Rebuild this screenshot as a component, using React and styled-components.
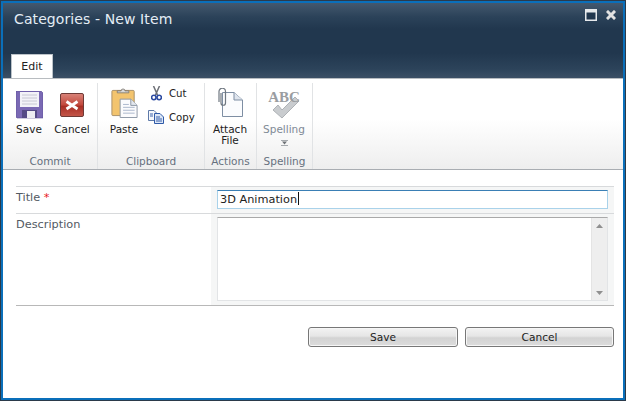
import React from "react";
import styled, { createGlobalStyle } from "styled-components";

const GlobalStyle = createGlobalStyle`
  html, body { margin: 0; padding: 0; background: #fff; overflow: hidden; }
  body { font-family: "DejaVu Sans", Verdana, sans-serif; }
`;

const Frame = styled.div`
  box-sizing: border-box;
  width: 626px;
  height: 401px;
  border: 1px solid #2b3a4a;
  display: flex;
`;

const Dialog = styled.div`
  flex: 1;
  display: flex;
  flex-direction: column;
  border: 2px solid #0a6fba;
  background: #fff;
  min-width: 0;
`;

const Header = styled.header`
  height: 75px;
  flex: none;
  display: flex;
  flex-direction: column;
  justify-content: space-between;
  background: linear-gradient(#44586e 0, #2b4259 14px, #21374e 26px, #21374e 50px, #2c435a 66px, #3b4f65 75px);
`;

const TitleRow = styled.div`
  display: flex;
  align-items: flex-start;
  justify-content: space-between;
  padding: 7px 7px 0 11px;
`;

const DialogTitle = styled.h1`
  margin: 0;
  font-size: 14px;
  line-height: 18px;
  font-weight: 400;
  color: #e4edf5;
  letter-spacing: 0.1px;
`;

const WindowControls = styled.div`
  display: flex;
  gap: 9px;
  align-items: center;
  margin-top: -1px;
`;

const Tab = styled.div`
  box-sizing: border-box;
  width: 42px;
  height: 24px;
  margin-left: 8px;
  border: 1px solid #bcc3c9;
  border-bottom: 0;
  background: #fff;
  color: #222;
  font-size: 11px;
  line-height: 24px;
  text-align: center;
`;

const Ribbon = styled.div`
  box-sizing: border-box;
  height: 92px;
  flex: none;
  display: flex;
  padding-top: 4px;
  border-top: 1px solid #b8bcc0;
  border-bottom: 1px solid #a9adb2;
  background: linear-gradient(#fff 0, #fff 40px, #eeeeee 90px);
`;

const Group = styled.section`
  box-sizing: border-box;
  width: ${(p) => p.$width}px;
  display: flex;
  flex-direction: column;
  border-right: 1px solid #e1e3e5;
`;

const GroupBody = styled.div`
  flex: 1;
  display: flex;
  padding: 5px 0 0 ${(p) => p.$inset || 0}px;
`;

const GroupLabel = styled.div`
  height: 16px;
  font-size: 10.5px;
  line-height: 16px;
  text-align: center;
  color: #66707e;
`;

const LargeButton = styled.div`
  width: ${(p) => p.$width}px;
  display: flex;
  flex-direction: column;
  align-items: center;
  color: ${(p) => (p.$muted ? "#7f8a96" : "#222")};
  font-size: 10.5px;
  line-height: 11px;
  text-align: center;
`;

const IconSlot = styled.div`
  height: 33px;
  margin-bottom: 3px;
  display: flex;
  align-items: ${(p) => p.$align || "center"};
  justify-content: center;
`;

const SplitMark = styled.span`
  display: flex;
  margin-top: 5px;
`;

const SmallStack = styled.div`
  display: flex;
  flex-direction: column;
  gap: 8px;
  margin: -3px 0 0 3px;
`;

const SmallButton = styled.div`
  display: flex;
  align-items: center;
  gap: 5px;
  height: 16px;
  font-size: 10.2px;
  color: #222;
`;

const SmallIcon = styled.span`
  width: 16px;
  display: flex;
  justify-content: center;
`;

const Form = styled.div`
  margin: 16px 9px 0 13px;
  border-top: 1px solid #d8dadc;
`;

const Row = styled.div`
  display: grid;
  grid-template-columns: 195px 1fr;
  height: ${(p) => p.$height}px;
  border-bottom: 1px solid ${(p) => p.$line};
`;

const Label = styled.div`
  padding-top: 4px;
  font-size: 11.3px;
  line-height: 14px;
  color: #525a63;
`;

const Required = styled.span`
  color: #e8141c;
`;

const Field = styled.div`
  background: #f5f6f6;
  padding: 3px 6px;
`;

const TextInput = styled.div`
  box-sizing: border-box;
  height: 19px;
  padding-left: 2px;
  border: 1px solid #a9d2ea;
  border-top-color: #3a7fb5;
  background: #fff;
  color: #222;
  font-size: 11.3px;
  line-height: 18px;
`;

const Caret = styled.span`
  display: inline-block;
  width: 1px;
  height: 13px;
  margin-left: 1px;
  background: #111;
  vertical-align: -2px;
`;

const TextArea = styled.div`
  box-sizing: border-box;
  height: 84px;
  display: flex;
  justify-content: flex-end;
  border: 1px solid #e2e4e6;
  border-top-color: #a9a9a9;
  background: #fff;
`;

const Scrollbar = styled.div`
  width: 16px;
  display: flex;
  flex-direction: column;
  justify-content: space-between;
  align-items: center;
  padding: 6px 0 5px;
  box-sizing: border-box;
  background: #eeeeee;
  border-left: 1px solid #e4e4e4;
`;

const Actions = styled.div`
  display: flex;
  justify-content: flex-end;
  gap: 7px;
  margin: 21px 9px 0 0;
`;

const PushButton = styled.div`
  box-sizing: border-box;
  width: ${(p) => p.$width}px;
  height: 20px;
  border: 1px solid #777;
  border-radius: 3px;
  background: linear-gradient(#f3f3f3 0, #e6e6e6 45%, #d3d3d3 55%, #dcdcdc 100%);
  box-shadow: inset 0 0 0 1px #f6f6f6;
  color: #222;
  font-size: 10.6px;
  line-height: 19px;
  text-align: center;
`;

const Maximize = () => (
  <svg width="12" height="12" viewBox="0 0 12 12">
    <rect x="0.75" y="0.75" width="10.5" height="10.5" fill="#21374e" stroke="#e6e9ec" strokeWidth="1.5" />
    <rect x="1" y="1" width="10" height="2.5" fill="#e6e9ec" />
  </svg>
);

const Close = () => (
  <svg width="10" height="10" viewBox="0 0 10 10">
    <path d="M2 2 L8 8 M8 2 L2 8" stroke="#e2e2e2" strokeWidth="3" strokeLinecap="square" />
  </svg>
);

const Floppy = () => (
  <svg width="27" height="28" viewBox="0 0 27 28">
    <path d="M0 0 H25 L27 2 V27 H1 L0 26 Z" fill="#7a69b4" stroke="#5d4f96" strokeWidth="0.6" />
    <rect x="4" y="1" width="19" height="15" fill="#f3f3f8" />
    <path d="M6 4 H21 M6 7 H21 M6 10 H21 M6 13 H21" stroke="#c8c8d4" />
    <rect x="6" y="19" width="15" height="8" fill="#544a86" />
    <rect x="11" y="20" width="8" height="7" fill="#ececf2" />
  </svg>
);

const CancelIcon = () => (
  <svg width="24" height="24" viewBox="0 0 24 24">
    <defs>
      <linearGradient id="cancelFill" x1="0" y1="0" x2="0" y2="1">
        <stop offset="0" stopColor="#d9847a" />
        <stop offset="0.5" stopColor="#c2483c" />
        <stop offset="0.55" stopColor="#a82e24" />
        <stop offset="1" stopColor="#c4574a" />
      </linearGradient>
    </defs>
    <rect x="0.5" y="0.5" width="23" height="23" rx="1.5" fill="url(#cancelFill)" stroke="#6e3a36" />
    <path d="M6.5 8.5 L17.5 16 M17.5 8.5 L6.5 16" stroke="#fff" strokeWidth="2.8" />
  </svg>
);

const Paste = () => (
  <svg width="27" height="30" viewBox="0 0 27 31">
    <rect x="0.5" y="2.5" width="23" height="26" rx="1" fill="#f3c46e" stroke="#a88f68" />
    <path d="M6 5 V3 H10 A2 2 0 0 1 14 3 H18 V5 Z" fill="#d8d8d8" stroke="#77726a" strokeWidth="0.8" />
    <path d="M9 11.5 H20 L26.5 18 V30.5 H9 Z" fill="#fbfbfd" stroke="#8d97a6" />
    <path d="M20 11.5 V18 H26.5" fill="#e3e7ee" stroke="#8d97a6" />
    <path d="M12 17 H18 M12 20 H24 M12 23 H24 M12 26 H24" stroke="#aab6cc" />
  </svg>
);

const Scissors = () => (
  <svg width="11" height="15" viewBox="0 0 11 15">
    <path d="M2.5 0 L6.5 9 M8.5 0 L4.5 9" stroke="#6d7076" strokeWidth="1.5" />
    <circle cx="2.8" cy="11.5" r="2.2" fill="none" stroke="#2c4aa0" strokeWidth="1.6" />
    <circle cx="8.2" cy="11.5" r="2.2" fill="none" stroke="#2c4aa0" strokeWidth="1.6" />
  </svg>
);

const CopyIcon = () => (
  <svg width="16" height="14" viewBox="0 0 16 14">
    <path d="M0.5 0.5 H6 L8.5 3 V10.5 H0.5 Z" fill="#f6f8fc" stroke="#5d79a8" />
    <path d="M6.5 3.5 H12 L15.5 7 V13.5 H6.5 Z" fill="#dce6f6" stroke="#2f5aa8" />
    <path d="M8 7 H12 M8 9 H14 M8 11 H14 M2 4 H5 M2 6 H5" stroke="#3b62ac" />
  </svg>
);

const Attach = () => (
  <svg width="25" height="29" viewBox="0 0 25 29">
    <path d="M4.5 4.5 H16 L24.5 12 V28.5 H4.5 Z" fill="#fbfcfe" stroke="#7e8ea3" />
    <path d="M16 4.5 V12 H24.5" fill="#dfe5ee" stroke="#7e8ea3" />
    <path
      d="M3 5 V15 A2.2 2.2 0 0 0 7.5 15 V3.5 A3 3 0 0 0 1 3.5 V14"
      fill="none"
      stroke="#6f7780"
      strokeWidth="1.2"
    />
  </svg>
);

const Spelling = () => (
  <svg width="34" height="31" viewBox="0 0 34 31">
    <path d="M6 21 L11 16 L15 21 L28 8 L32 12 L15 29 Z" fill="#c9cccf" stroke="#aeb2b6" />
    <text x="17" y="13" textAnchor="middle" fontFamily="Liberation Serif" fontWeight="700" fontSize="15" fill="#9a9da1">
      ABC
    </text>
  </svg>
);

const SplitArrow = () => (
  <svg width="7" height="6" viewBox="0 0 7 6">
    <path d="M0 0.5 H7 M0 5.5 H7" stroke="#a5a9ad" />
    <path d="M1 1.5 H6 L3.5 4.5 Z" fill="#6e7277" />
  </svg>
);

const ScrollArrow = ({ up }) => (
  <svg width="7" height="4" viewBox="0 0 7 4">
    <path d={up ? "M0 4 L3.5 0 L7 4 Z" : "M0 0 L7 0 L3.5 4 Z"} fill="#8f8f8f" />
  </svg>
);

const App = () => {
  return (
    <Frame>
      <GlobalStyle />
      <Dialog>
        <Header>
          <TitleRow>
            <DialogTitle>Categories - New Item</DialogTitle>
            <WindowControls>
              <Maximize />
              <Close />
            </WindowControls>
          </TitleRow>
          <Tab>Edit</Tab>
        </Header>
        <Ribbon>
          <Group $width={95}>
            <GroupBody $inset={4}>
              <LargeButton $width={44}>
                <IconSlot><Floppy /></IconSlot>
                Save
              </LargeButton>
              <LargeButton $width={42}>
                <IconSlot><CancelIcon /></IconSlot>
                Cancel
              </LargeButton>
            </GroupBody>
            <GroupLabel>Commit</GroupLabel>
          </Group>
          <Group $width={107}>
            <GroupBody $inset={5}>
              <LargeButton $width={42}>
                <IconSlot $align="flex-start"><Paste /></IconSlot>
                Paste
              </LargeButton>
              <SmallStack>
                <SmallButton><SmallIcon><Scissors /></SmallIcon>Cut</SmallButton>
                <SmallButton><SmallIcon><CopyIcon /></SmallIcon>Copy</SmallButton>
              </SmallStack>
            </GroupBody>
            <GroupLabel>Clipboard</GroupLabel>
          </Group>
          <Group $width={52}>
            <GroupBody $inset={0}>
              <LargeButton $width={50}>
                <IconSlot $align="flex-start"><Attach /></IconSlot>
                Attach
                <br />
                File
              </LargeButton>
            </GroupBody>
            <GroupLabel>Actions</GroupLabel>
          </Group>
          <Group $width={56}>
            <GroupBody $inset={1}>
              <LargeButton $width={52} $muted>
                <IconSlot><Spelling /></IconSlot>
                Spelling
                <SplitMark><SplitArrow /></SplitMark>
              </LargeButton>
            </GroupBody>
            <GroupLabel>Spelling</GroupLabel>
          </Group>
        </Ribbon>
        <Form>
          <Row $height={26} $line="#d8dadc">
            <Label>Title <Required>*</Required></Label>
            <Field>
              <TextInput>3D Animation<Caret /></TextInput>
            </Field>
          </Row>
          <Row $height={91} $line="#b8b8b8">
            <Label>Description</Label>
            <Field>
              <TextArea>
                <Scrollbar>
                  <ScrollArrow up />
                  <ScrollArrow />
                </Scrollbar>
              </TextArea>
            </Field>
          </Row>
        </Form>
        <Actions>
          <PushButton $width={150}>Save</PushButton>
          <PushButton $width={149}>Cancel</PushButton>
        </Actions>
      </Dialog>
    </Frame>
  );
};

export default App;
